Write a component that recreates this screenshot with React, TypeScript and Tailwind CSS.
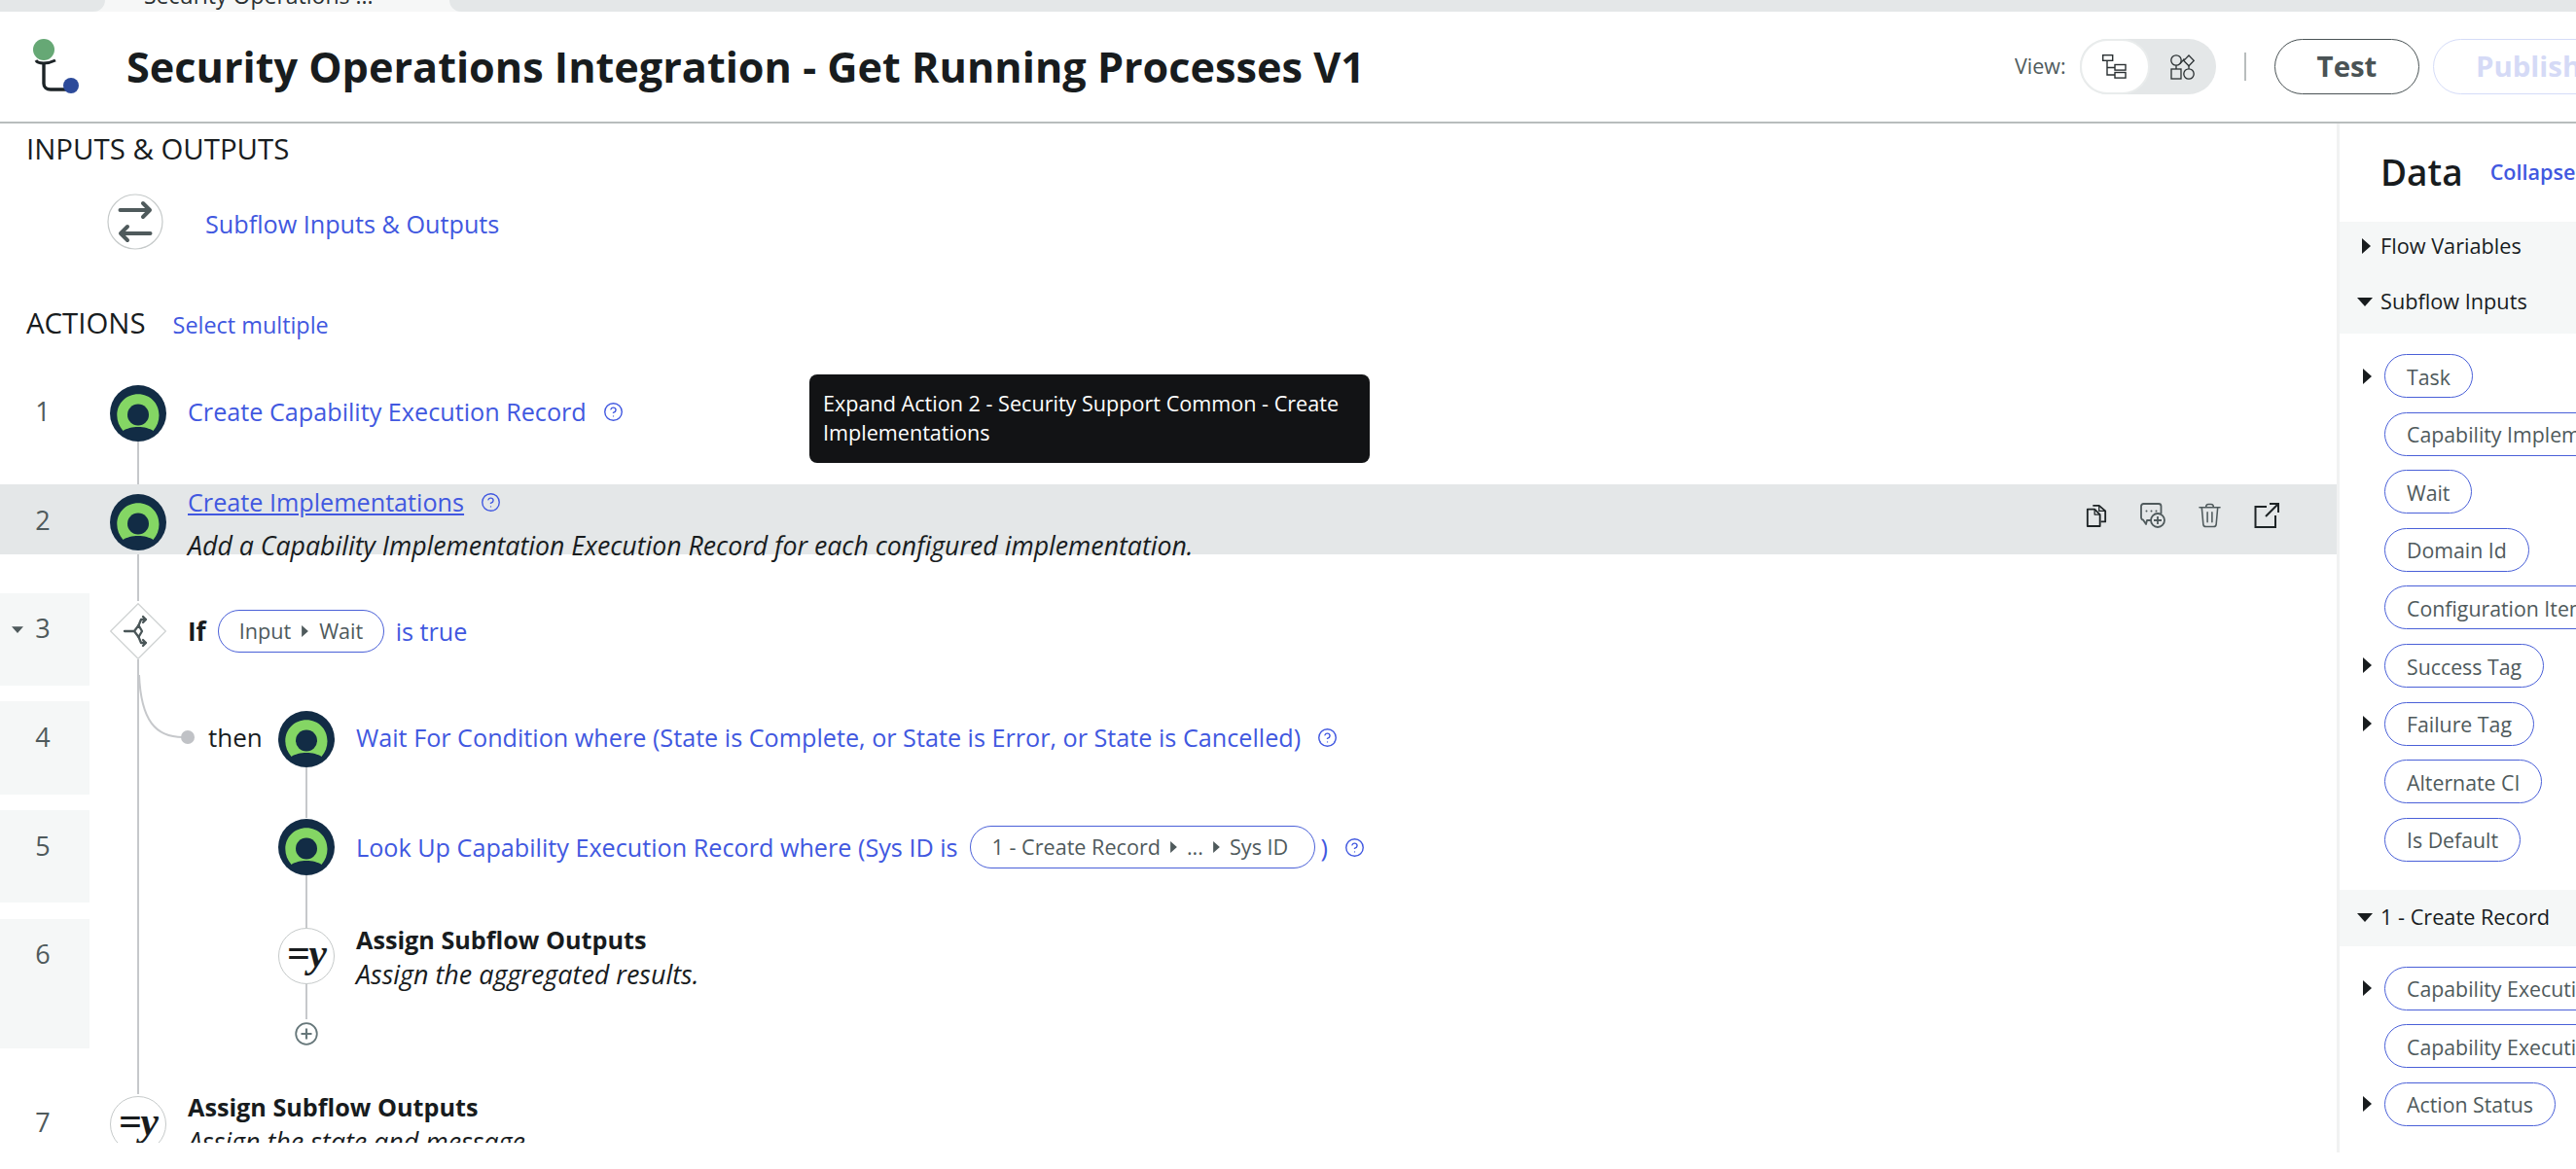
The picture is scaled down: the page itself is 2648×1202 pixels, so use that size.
import React from 'react';
import { CircleHelp } from 'lucide-react';

const ActionIcon = () => (
  <svg width="58" height="58" viewBox="0 0 58 58" className="shrink-0">
    <circle cx="29" cy="29" r="29" fill="#122c45" />
    <path
      d="M13.5 47 C9.5 42 7.3 37 7.3 31 C7.3 18.5 17 9.3 29 9.3 C41 9.3 50.5 18.5 50.5 31 C50.5 37 48.5 42 44.5 47 C41 44.5 35 43 29 43 C23 43 17 44.5 13.5 47 Z"
      fill="#84d664"
    />
    <circle cx="29" cy="30.5" r="11" fill="#122c45" />
  </svg>
);

const AssignIcon = () => (
  <div className="w-[58px] h-[58px] shrink-0 rounded-full border border-[#c6caca] bg-white flex items-center justify-center font-['Liberation_Serif',serif] font-bold italic text-[42px] tracking-[-1.5px] leading-none text-[#181c1e] pb-[6px] pr-[1px]">
    =y
  </div>
);

const Line = ({ className }: { className: string }) => <div className={`w-[2px] bg-[#c6c8cb] shrink-0 ${className}`} />;

const Help = ({ className = '' }: { className?: string }) => (
  <CircleHelp size={21} strokeWidth={1.6} className={`text-[#4158e0] shrink-0 ${className}`} />
);

const RightCaret = ({ small = false }: { small?: boolean }) => (
  <svg width={small ? 7 : 9} height={small ? 12 : 16} viewBox="0 0 9 16" className="shrink-0">
    <polygon points="0,0 9,8 0,16" fill={small ? '#4f5a5c' : '#181c1e'} />
  </svg>
);

const DownCaret = ({ small = false }: { small?: boolean }) => (
  <svg width={small ? 12 : 16} height={small ? 7 : 9} viewBox="0 0 16 9" className="shrink-0">
    <polygon points="0,0 16,0 8,9" fill={small ? '#4f5a5c' : '#181c1e'} />
  </svg>
);

const Num = ({ n, className, shaded = false, children }: { n: number; className: string; shaded?: boolean; children?: React.ReactNode }) => (
  <div className={`relative w-[92px] shrink-0 pr-1 flex justify-center text-[27px] leading-[40px] text-[#4f5a5c] ${shaded ? 'bg-[#f5f7f7]' : ''} ${className}`}>
    {children}
    {n}
  </div>
);

const Link = ({ children, className = '' }: { children: React.ReactNode; className?: string }) => (
  <span className={`text-[#4158e0] text-[25.2px] leading-[40px] whitespace-nowrap ${className}`}>{children}</span>
);

const RefPill = ({ children, className = '' }: { children: React.ReactNode; className?: string }) => (
  <span className={`h-[44px] rounded-full border-[1.5px] border-[#4a60d8] bg-white flex items-center whitespace-nowrap text-[21.6px] text-[#4f5a5c] ${className}`}>
    {children}
  </span>
);

const DataPill = ({ label, caret = false }: { label: string; caret?: boolean }) => (
  <div className="flex items-center h-[45px]">
    <div className="w-[46px] shrink-0 flex justify-end pr-[13px]">{caret && <RightCaret />}</div>
    <div className="h-[45px] shrink-0 rounded-full border-[1.5px] border-[#4a60d8] pl-[22px] pr-[22px] pt-[2px] flex items-center whitespace-nowrap text-[21.3px] text-[#4f5a5c]">
      {label}
    </div>
  </div>
);

const Logo = () => (
  <svg width="60" height="64" viewBox="0 0 60 64" className="shrink-0">
    <path d="M7 24 C9 28 19 28 27 24" fill="none" stroke="#1c2326" strokeWidth="3" />
    <path d="M15 27 V48 C15 52 18 54 22 54 H38" fill="none" stroke="#1c2326" strokeWidth="3.4" />
    <ellipse cx="15" cy="13" rx="11" ry="11" fill="#66a875" />
    <circle cx="43" cy="50" r="8" fill="#2c4a9a" />
  </svg>
);

const TreeView = () => (
  <svg width="25" height="25" viewBox="0 0 25 25" fill="none" stroke="#2a3032" strokeWidth="1.4">
    <rect x="0.7" y="0.7" width="10" height="5.6" />
    <path d="M5 6.3 V21 H13 M5 13.5 H13" />
    <rect x="13" y="10.5" width="11" height="5.6" fill="#fff" />
    <rect x="13" y="18.5" width="11" height="5.6" fill="#fff" />
  </svg>
);

const FreeView = () => (
  <svg width="25" height="26" viewBox="0 0 25 26" fill="none" stroke="#2a3032" strokeWidth="1.3">
    <circle cx="6" cy="6" r="5.2" />
    <polygon points="19,1 24.2,6.4 19,11.8 13.8,6.4" />
    <rect x="1" y="15" width="10" height="10" />
    <circle cx="19" cy="20" r="5.2" />
    <path d="M6 11.2 V15 M19 11.8 V14.8 M10 9.6 L14.4 4.4" />
  </svg>
);

const SwapIcon = () => (
  <svg width="58" height="58" viewBox="0 0 58 58" fill="none" className="shrink-0">
    <circle cx="29" cy="29" r="28" fill="#fff" stroke="#c6caca" strokeWidth="1.2" />
    <g stroke="#4f5a5c" strokeWidth="4" strokeLinecap="round" strokeLinejoin="round">
      <path d="M13.5 17 H43 M37 10 L44 17 L37 24" />
      <path d="M44.5 41 H15 M21 34 L14 41 L21 48" />
    </g>
  </svg>
);

const DiamondIcon = () => (
  <svg width="58" height="58" viewBox="0 0 58 58" fill="none" className="shrink-0">
    <polygon points="29,0.7 57.3,29 29,57.3 0.7,29" fill="#fff" stroke="#d0d3d3" strokeWidth="1.3" />
    <g stroke="#4a5658" strokeWidth="2.3" strokeLinejoin="round" strokeLinecap="round">
      <path d="M15 29 H25 L29.5 23 L33 29 L29.5 35 L25 29" />
      <path d="M29.5 23 L32 17 H37 M34 14 L37 17 L34 20" />
      <path d="M29.5 35 L32 41 H37 M34 38 L37 41 L34 44" />
    </g>
  </svg>
);

const AddIcon = () => (
  <svg width="24" height="24" viewBox="0 0 24 24" fill="none" className="shrink-0">
    <circle cx="12" cy="12" r="10.8" fill="#fff" stroke="#66777a" strokeWidth="1.8" />
    <path d="M12 6.5 V17.5 M6.5 12 H17.5" stroke="#66777a" strokeWidth="2.2" />
  </svg>
);

const CopyIcon = () => (
  <svg width="22" height="26" viewBox="0 0 24 26" fill="none" stroke="#1e2426" strokeWidth="2" strokeLinejoin="round">
    <path d="M8 2 H15 L22 8 V20 H17" />
    <path d="M15 2 V8 H22" strokeWidth="1.4" />
    <path d="M2 6 H10 L16 12 V25 H2 Z" fill="#e4e7e8" />
    <path d="M10 6 V12 H16" strokeWidth="1.4" />
  </svg>
);

const CommentAddIcon = () => (
  <svg width="26" height="26" viewBox="0 0 26 26" fill="none" stroke="#4f5a5c" strokeWidth="1.8" strokeLinejoin="round">
    <path d="M12 18 H7 L6 22 L3 17.5 C2 17.5 1 16.5 1 15 V3.5 C1 2 2 1 3.5 1 H19 C20.5 1 21.5 2 21.5 3.5 V11" />
    <circle cx="6.5" cy="8.5" r="1" fill="#4f5a5c" stroke="none" />
    <circle cx="11.5" cy="8.5" r="1" fill="#4f5a5c" stroke="none" />
    <circle cx="16.5" cy="8.5" r="1" fill="#4f5a5c" stroke="none" />
    <circle cx="18" cy="18" r="7" fill="#e4e7e8" />
    <path d="M18 14 V22 M14 18 H22" />
  </svg>
);

const TrashIcon = () => (
  <svg width="23" height="26" viewBox="0 0 24 26" fill="none" stroke="#4f5a5c" strokeWidth="1.6" strokeLinecap="round" strokeLinejoin="round">
    <path d="M1 4.5 H23 M8 4 C8 2 9 1 10.5 1 H13.5 C15 1 16 2 16 4" />
    <path d="M3.5 5 L5 22 C5 24 6 25 8 25 H16 C18 25 19 24 19 22 L20.5 5" />
    <path d="M9.5 9.5 V20 M14.5 9.5 V20" />
  </svg>
);

const OpenIcon = () => (
  <svg width="26" height="26" viewBox="0 0 26 26" fill="none" stroke="#1e2426" strokeWidth="2">
    <path d="M13 4 H1.5 V25 H22 V13" />
    <path d="M12 14 L25 1 M16 1 H25 V10" />
  </svg>
);

export default function App() {
  return (
    <div className="relative w-[2648px] h-[1202px] overflow-hidden bg-white font-['Open_Sans',sans-serif] text-[#181c1e]">
      {/* tab strip */}
      <div className="flex h-[12px] bg-[#f6f7f7] overflow-hidden">
        <div className="w-[108px] bg-[#e4e7e8] rounded-br-[12px]" />
        <div className="w-[354px] pl-[40px] text-[23px] leading-[32px] -mt-[21px] text-[#2a3032] whitespace-nowrap">Security Operations ...</div>
        <div className="flex-1 bg-[#e4e7e8] rounded-bl-[12px]" />
      </div>

      {/* header */}
      <header className="h-[115px] border-b-2 border-[#b8bdbd] flex items-center overflow-hidden">
        <div className="pl-[30px] pt-[2px] w-[129px] shrink-0">
          <Logo />
        </div>
        <h1 className="flex-1 text-[43.2px] font-bold leading-none whitespace-nowrap pl-[1px]">Security Operations Integration - Get Running Processes V1</h1>
        <div className="w-[577px] shrink-0 flex items-center overflow-hidden">
          <span className="text-[21.5px] text-[#4f5a5c] w-[67px] shrink-0">View:</span>
          <div className="w-[140px] h-[57px] shrink-0 rounded-full bg-[#e4e7e8] flex items-center">
            <div className="w-[72px] h-[57px] rounded-full bg-white border-2 border-[#e9ecec] flex items-center justify-center pr-[2px]">
              <TreeView />
            </div>
            <div className="ml-[21px]">
              <FreeView />
            </div>
          </div>
          <div className="ml-[29px] w-[2px] h-[29px] bg-[#b8bdbd] shrink-0" />
          <button className="ml-[29px] w-[149px] h-[57px] shrink-0 rounded-full border-[1.5px] border-[#4a5355] text-[29.4px] font-bold text-[#4a5355]">Test</button>
          <button className="ml-[14px] w-[200px] h-[57px] shrink-0 rounded-full border-[1.5px] border-[#d5dcf8] text-[29.4px] font-bold text-[#d5daf6] text-left pl-[43px]">Publish</button>
        </div>
      </header>

      <div className="flex h-[1058px]">
        {/* main column */}
        <main className="w-[2402px] shrink-0 h-[1048px] overflow-hidden">
          <div className="pl-[27px] pt-[6px] text-[29.4px] leading-[40px]">INPUTS &amp; OUTPUTS</div>
          <div className="mt-[26px] pl-[110px] flex items-center h-[58px]">
            <SwapIcon />
            <span className="text-[#4158e0] text-[25.2px] leading-[40px] ml-[43px] mt-[4px]">Subflow Inputs &amp; Outputs</span>
          </div>
          <div className="mt-[55px] pl-[27px] flex items-baseline">
            <span className="text-[29.4px] leading-[40px]">ACTIONS</span>
            <span className="ml-[28px] text-[23.4px] leading-[40px]  text-[#4158e0]">Select multiple</span>
          </div>

          <div className="relative mt-[40px]">
            {/* 1 */}
            <div className="flex h-[104px]">
              <Num n={1} className="pt-[9px]" />
              <div className="ml-[21px] mt-[2px] flex flex-col items-center">
                <ActionIcon />
                <Line className="h-[44px]" />
              </div>
              <div className="ml-[22px] mt-[9px] flex items-center h-[40px]">
                <Link>Create Capability Execution Record</Link>
                <Help className="ml-[17px]" />
              </div>
            </div>

            {/* 2 */}
            <div className="flex h-[72px] bg-[#e4e7e8]">
              <Num n={2} className="pt-[17px]" />
              <div className="ml-[21px] mt-[10px] flex flex-col items-center">
                <ActionIcon />
                <Line className="h-[48px] mt-[4px]" />
              </div>
              <div className="ml-[22px]">
                <div className="flex items-center h-[36px]">
                  <Link className="underline">Create Implementations</Link>
                  <Help className="ml-[17px]" />
                </div>
                <div className="mt-[7px] text-[26.7px] leading-[40px] italic whitespace-nowrap">Add a Capability Implementation Execution Record for each configured implementation.</div>
              </div>
              <div className="ml-auto pr-[59px] pt-[19px] flex items-start gap-[34px]">
                <CopyIcon />
                <CommentAddIcon />
                <TrashIcon />
                <OpenIcon />
              </div>
            </div>

            <div className="h-[40px]" />

            {/* 3 */}
            <div className="flex h-[95px]">
              <Num n={3} shaded className="pt-[16px]">
                <span className="absolute left-[12px] top-[34px] flex">
                  <DownCaret small />
                </span>
              </Num>
              <div className="ml-[21px] mt-[10px] flex flex-col items-center">
                <DiamondIcon />
                <Line className="h-[447px]" />
              </div>
              <div className="ml-[22px] mt-[10px] flex items-center h-[58px]">
                <span className="text-[26px] font-bold">If</span>
                <RefPill className="ml-[12px] w-[171px] pl-[21px] gap-[11px]">
                  Input <RightCaret small /> Wait
                </RefPill>
                <Link className="ml-[12px]">is true</Link>
              </div>
            </div>

            <div className="h-[16px]" />

            {/* 4 */}
            <div className="relative flex h-[96px]">
              <Num n={4} shaded className="pt-[17px]" />
              <svg width="60" height="72" viewBox="0 0 60 72" fill="none" className="absolute left-[142px] -top-[27px]">
                <path d="M1 0 C3 47 18 64 46 64" stroke="#c6c8cb" strokeWidth="2" />
              </svg>
              <div className="relative ml-[94px] mt-[30px] w-[14px] h-[14px] rounded-full bg-[#c0c2c6] shrink-0" />
              <span className="ml-[14px] mt-[17px] w-[72px] text-[26px] leading-[40px] shrink-0">then</span>
              <div className="mt-[10px] flex flex-col items-center">
                <ActionIcon />
                <Line className="h-[52px]" />
              </div>
              <div className="ml-[22px] mt-[17px] flex items-center h-[40px]">
                <Link>Wait For Condition where (State is Complete, or State is Error, or State is Cancelled)</Link>
                <Help className="ml-[17px]" />
              </div>
            </div>

            <div className="h-[16px]" />

            {/* 5 */}
            <div className="flex h-[95px]">
              <Num n={5} shaded className="pt-[17px]" />
              <div className="ml-[194px] mt-[9px] flex flex-col items-center">
                <ActionIcon />
                <Line className="h-[54px]" />
              </div>
              <div className="ml-[22px] mt-[9px] flex items-center h-[58px]">
                <Link>Look Up Capability Execution Record where (Sys ID is</Link>
                <RefPill className="ml-[12px] w-[355px] pl-[22px] gap-[10px]">
                  1 - Create Record <RightCaret small /> ... <RightCaret small /> Sys ID
                </RefPill>
                <Link className="ml-[6px]">)</Link>
                <Help className="ml-[17px]" />
              </div>
            </div>

            <div className="h-[17px]" />

            {/* 6 */}
            <div className="flex h-[133px]">
              <Num n={6} shaded className="pt-[16px]" />
              <div className="ml-[194px] mt-[9px] flex flex-col items-center">
                <AssignIcon />
                <Line className="h-[36px]" />
                <div className="mt-[3px]">
                  <AddIcon />
                </div>
              </div>
              <div className="ml-[22px] mt-[3px]">
                <div className="text-[25.2px] leading-[36px] font-bold whitespace-nowrap">Assign Subflow Outputs</div>
                <div className="text-[26.9px] leading-[36px] italic whitespace-nowrap">Assign the aggregated results.</div>
              </div>
            </div>

            <div className="h-[16px]" />

            {/* 7 */}
            <div className="flex h-[120px]">
              <Num n={7} className="pt-[40px]" />
              <div className="ml-[21px] mt-[33px]">
                <AssignIcon />
              </div>
              <div className="ml-[22px] mt-[26px]">
                <div className="text-[25.2px] leading-[36px] font-bold whitespace-nowrap">Assign Subflow Outputs</div>
                <div className="text-[26.9px] leading-[36px] italic whitespace-nowrap">Assign the state and message.</div>
              </div>
            </div>

            {/* tooltip */}
            <div className="absolute left-[832px] -top-[9px] w-[576px] h-[91px] rounded-[8px] bg-[#121315] text-white text-[21.6px] leading-[30px] pl-[14px] pt-[15px]">
              Expand Action 2 - Security Support Common - Create Implementations
            </div>
          </div>
        </main>

        {/* data panel */}
        <aside className="flex-1 border-l-[3px] border-[#f1f2f2] overflow-hidden">
          <div className="h-[101px] flex items-center pl-[42px] pb-[1px]">
            <span className="text-[37px] font-semibold">Data</span>
            <span className="ml-[28px] text-[21.6px] font-semibold text-[#4158e0] whitespace-nowrap">Collapse</span>
          </div>
          <div className="bg-[#f5f7f7] h-[115px] text-[21.7px]">
            <div className="h-[50px] flex items-center">
              <div className="w-[42px] flex justify-end pr-[10px]">
                <RightCaret />
              </div>
              Flow Variables
            </div>
            <div className="h-[65px] flex items-center">
              <div className="w-[42px] flex justify-end pr-[8px]">
                <DownCaret />
              </div>
              Subflow Inputs
            </div>
          </div>
          <div className="pt-[21px] flex flex-col gap-[14.6px]">
            <DataPill label="Task" caret />
            <DataPill label="Capability Implementations" />
            <DataPill label="Wait" />
            <DataPill label="Domain Id" />
            <DataPill label="Configuration Item" />
            <DataPill label="Success Tag" caret />
            <DataPill label="Failure Tag" caret />
            <DataPill label="Alternate CI" />
            <DataPill label="Is Default" />
          </div>
          <div className="mt-[29px] bg-[#f5f7f7] h-[58px] flex items-center text-[21.7px] whitespace-nowrap">
            <div className="w-[42px] flex justify-end pr-[8px]">
              <DownCaret />
            </div>
            1 - Create Record
          </div>
          <div className="pt-[21px] flex flex-col gap-[14.6px]">
            <DataPill label="Capability Execution Record" caret />
            <DataPill label="Capability Execution Records" />
            <DataPill label="Action Status" caret />
          </div>
        </aside>
      </div>
    </div>
  );
}
